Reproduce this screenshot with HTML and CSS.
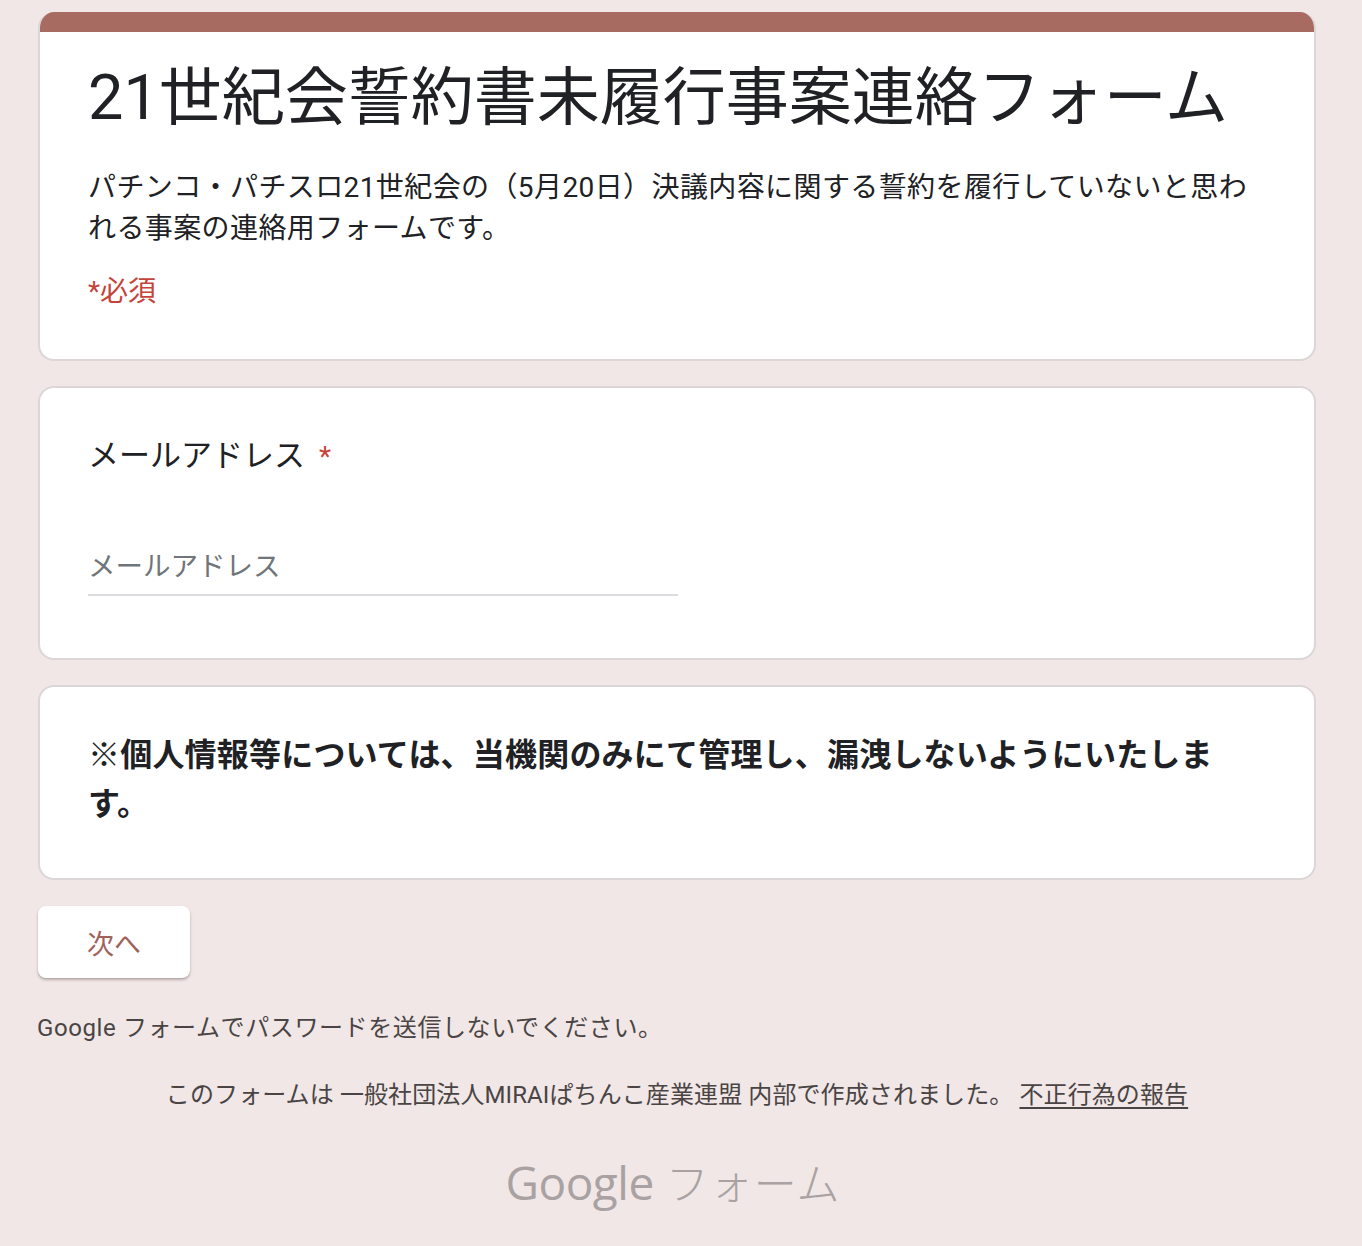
FILE: index.html
```html
<!DOCTYPE html>
<html lang="ja">
<head>
<meta charset="utf-8">
<title>21世紀会誓約書未履行事案連絡フォーム</title>
<link rel="stylesheet" href="styles.css">
</head>
<body>
<div class="page">
  <div class="card header-card">
    <div class="bar"></div>
    <div class="header-body">
      <h1 class="title">21世紀会誓約書未履行事案連絡フォーム</h1>
      <p class="desc">パチンコ・パチスロ21世紀会の（5月20日）決議内容に関する誓約を履行していないと思われる事案の連絡用フォームです。</p>
      <p class="required">*必須</p>
    </div>
  </div>

  <div class="card question-card">
    <div class="q-title">メールアドレス<span class="star">*</span></div>
    <div class="field"><span class="placeholder">メールアドレス</span></div>
  </div>

  <div class="card note-card">
    <p class="note">※個人情報等については、当機関のみにて管理し、漏洩しないようにいたします。</p>
  </div>

  <div class="actions">
    <button class="next-btn" type="button">次へ</button>
  </div>

  <p class="warn">Google フォームでパスワードを送信しないでください。</p>

  <p class="made">このフォームは 一般社団法人MIRAIぱちんこ産業連盟 内部で作成されました。 <a class="report" href="#">不正行為の報告</a></p>

  <div class="brand"><span class="brand-google">Google</span><span class="brand-forms">フォーム</span></div>
</div>
</body>
</html>
```

FILE: styles.css
```css
html, body {
  margin: 0;
  padding: 0;
  background: #f0e7e6;
}

body {
  font-family: "Roboto", "Noto Sans CJK JP", sans-serif;
  color: #202124;
}

.page {
  width: 1278px;
  margin-left: 38px;
  padding-top: 12px;
  padding-bottom: 40px;
}

.card {
  background: #ffffff;
  border: 2px solid #dcd6d6;
  border-radius: 16px;
  box-sizing: border-box;
  margin-bottom: 25px;
}

.header-card {
  border-top: none;
  overflow: hidden;
}

.bar {
  height: 20px;
  background: #a86b61;
  margin: 0 -2px;
}

.header-body {
  padding: 26px 48px 47px 48px;
}

.title {
  margin: 0;
  font-size: 63px;
  line-height: 80px;
  font-weight: 400;
  color: #202124;
}

.desc {
  margin: 29px 0 0 0;
  font-size: 28px;
  line-height: 41px;
  letter-spacing: 0.4px;
  color: #202124;
}

.required {
  margin: 23px 0 0 0;
  font-size: 28px;
  line-height: 40px;
  color: #c5433a;
}

.question-card {
  padding: 44px 48px 62px 48px;
}

.q-title {
  font-size: 31px;
  line-height: 48px;
  color: #202124;
}

.star {
  color: #c5433a;
  margin-left: 14px;
  font-size: 28px;
}

.field {
  width: 590px;
  margin-top: 66px;
  padding-bottom: 7px;
  border-bottom: 2px solid #dadce0;
}

.placeholder {
  display: block;
  font-size: 27.5px;
  line-height: 40px;
  color: #70757a;
}

.note-card {
  padding: 44px 48px 49px 48px;
}

.note {
  margin: 0;
  font-size: 32px;
  line-height: 49px;
  font-weight: 700;
  letter-spacing: 0.2px;
  color: #202124;
}

.actions {
  margin-top: 26px;
}

.next-btn {
  width: 152px;
  height: 72px;
  border: none;
  border-radius: 8px;
  background: #ffffff;
  box-shadow: 0 2px 3px rgba(60, 40, 40, 0.28), 0 1px 1px rgba(60, 40, 40, 0.1);
  font-family: "Roboto", "Noto Sans CJK JP", sans-serif;
  font-size: 27px;
  color: #9f6158;
  padding: 0;
}

.warn {
  margin: 34px 0 0 -1px;
  font-size: 24px;
  line-height: 32px;
  letter-spacing: 0.6px;
  color: #4a4444;
}

.made {
  margin: 35px 0 0 0;
  text-align: center;
  font-size: 24px;
  line-height: 32px;
  letter-spacing: 0.1px;
  color: #4a4444;
}

.report {
  color: #4a4444;
  text-decoration: underline;
  text-underline-offset: 4px;
}

.brand {
  margin-top: 40px;
  text-align: center;
  line-height: 60px;
  color: #aaa2a2;
  margin-left: -8px;
}

.brand-google {
  font-family: "Open Sans", "Roboto", sans-serif;
  font-size: 46px;
  font-weight: 500;
  letter-spacing: -0.5px;
}

.brand-forms {
  font-family: "Noto Sans CJK JP", sans-serif;
  font-size: 43px;
  font-weight: 300;
  letter-spacing: 1px;
  margin-left: 12px;
}
```
